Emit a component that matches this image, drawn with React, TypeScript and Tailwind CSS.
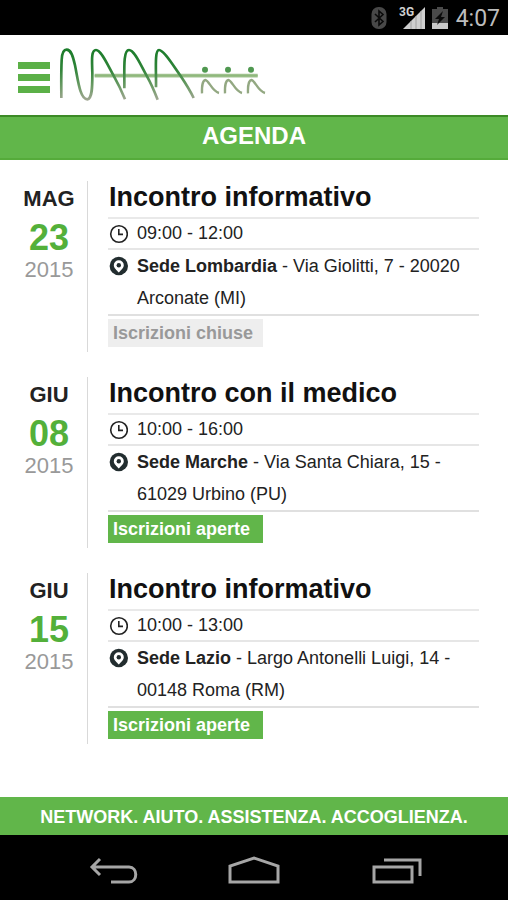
interface AgendaEvent {
  month: string;
  day: string;
  year: string;
  title: string;
  time: string;
  venue: string;
  address: string;
  open: boolean;
}

const EVENTS: AgendaEvent[] = [
  {
    month: "MAG",
    day: "23",
    year: "2015",
    title: "Incontro informativo",
    time: "09:00 - 12:00",
    venue: "Sede Lombardia",
    address: "Via Giolitti, 7 - 20020 Arconate (MI)",
    open: false,
  },
  {
    month: "GIU",
    day: "08",
    year: "2015",
    title: "Incontro con il medico",
    time: "10:00 - 16:00",
    venue: "Sede Marche",
    address: "Via Santa Chiara, 15 - 61029 Urbino (PU)",
    open: true,
  },
  {
    month: "GIU",
    day: "15",
    year: "2015",
    title: "Incontro informativo",
    time: "10:00 - 13:00",
    venue: "Sede Lazio",
    address: "Largo Antonelli Luigi, 14 - 00148 Roma (RM)",
    open: true,
  },
];

function StatusBar() {
  return (
    <div className="flex h-[35px] items-center justify-end bg-black pr-2">
      {/* Bluetooth */}
      <svg className="mr-3 h-[22px] w-4" viewBox="0 0 16 22" fill="none">
        <rect x="0.5" y="0" width="15" height="22" rx="7" fill="#484848" />
        <path d="M4 7l8 7.5-4 3.5V4l4 3.5L4 15" stroke="#0a0a0a" strokeWidth="1.6" />
      </svg>
      {/* Signal */}
      <svg className="mr-[7px] h-6 w-[26px]" viewBox="0 0 26 24">
        <path d="M26 1v22H4z" fill="#cfcfcf" />
        <path d="M12 15v8M17 10v13M22 5v18" stroke="#a0a0a0" strokeWidth="1" />
        <path d="M0 0h14v11H0z" fill="#000" />
        <text x="0" y="10" fontSize="12" fontWeight="700" fill="#d0d0d0" fontFamily="Roboto, sans-serif">
          3G
        </text>
      </svg>
      {/* Battery */}
      <svg className="mr-2 h-[22px] w-4" viewBox="0 0 16 22">
        <path d="M5 0h6v2h5v20H0V2h5z" fill="#4a4a4a" />
        <path d="M0 16h16v6H0z" fill="#c8c8c8" />
        <path d="M11 4l-8 8h4l-2 6 8-8H9z" fill="#0a0a0a" />
      </svg>
      <span className="pt-0.5 font-[Roboto,sans-serif] text-[23px] leading-8 text-[#bdbdbd]">4:07</span>
    </div>
  );
}

function Logo() {
  return (
    <svg className="h-[60px] w-[210px]" viewBox="174 30 630 180" fill="none" role="img" aria-label="NAAA">
      <defs>
        <linearGradient id="stroke" gradientUnits="userSpaceOnUse" x1="0" y1="36" x2="0" y2="192">
          <stop offset="0" stopColor="#1a7c2a" />
          <stop offset="0.4" stopColor="#2f8438" />
          <stop offset="0.75" stopColor="#6f9c68" />
          <stop offset="1" stopColor="#a0a692" />
        </linearGradient>
      </defs>
      <path d="M284 119H773" stroke="#a3c493" strokeWidth="11" />
      <path d="M284 119H773" stroke="#8fb87c" strokeWidth="5" />
      <g stroke="url(#stroke)" strokeWidth="8" strokeLinejoin="round">
        <path d="M184 186C184 150 183 110 185 72C186 50 192 41 200 41C213 41 219 60 225 88C234 132 240 190 262 190C278 188 277 145 277 110C276 75 273 42 288 42C304 42 325 92 342 121C354 142 366 168 375 190" />
        <path d="M373 157C374 110 368 42 387 42C404 42 424 92 441 121C453 142 464 168 473 191" />
        <path d="M468 154C469 108 463 42 477 42C492 42 521 91 542 120C556 141 571 165 581 186" />
      </g>
      {[615, 684, 753].map((x) => (
        <g key={x}>
          <circle cx={x} cy="101" r="9" fill="#4f9850" />
          <path
            d={`M${x - 9} 172C${x - 10} 150 ${x - 6} 133 ${x + 1} 132C${x + 12} 133 ${x + 20} 165 ${x + 42} 171`}
            stroke="#93a882"
            strokeWidth="7"
          />
        </g>
      ))}
    </svg>
  );
}

function Header() {
  return (
    <header className="flex h-20 items-center bg-white pt-0.5 pl-[18px]">
      <button type="button" aria-label="Menu" className="mt-[3px] flex w-8 flex-col gap-[5px]">
        <span className="h-[7px] w-full bg-[#5bb047]" />
        <span className="h-[7px] w-full bg-[#5bb047]" />
        <span className="h-[7px] w-full bg-[#5bb047]" />
      </button>
      <div className="ml-2">
        <Logo />
      </div>
    </header>
  );
}

function ClockIcon() {
  return (
    <svg className="h-5 w-5 shrink-0" viewBox="0 0 20 20" fill="none" stroke="#222" strokeWidth="1.6">
      <circle cx="11" cy="10" r="8.3" />
      <path d="M10.8 5v5.4H15" />
    </svg>
  );
}

function PinIcon() {
  return (
    <svg className="h-5 w-5 shrink-0" viewBox="0 0 20 20">
      <circle cx="10.8" cy="10" r="9.2" fill="#222d2f" />
      <path d="M10.8 16.5C8.8 14 5.8 12 5.8 9.2a5 5 0 0 1 10 0c0 2.8-3 4.8-5 7.3z" fill="#fff" />
      <circle cx="10.8" cy="9.2" r="2.2" fill="#222d2f" />
    </svg>
  );
}

function EventItem({ event }: { event: AgendaEvent }) {
  return (
    <article className="flex">
      <div className="flex w-[76px] shrink-0 flex-col items-center pt-1">
        <span className="text-[22px] leading-7 font-bold text-[#222]">{event.month}</span>
        <span className="text-[36px] leading-[50px] font-bold text-[#53b03a]">{event.day}</span>
        <span className="text-[22px] leading-3.5 text-[#999]">{event.year}</span>
      </div>

      <div className="min-w-0 flex-1 border-l border-[#d9d9d9] pb-[5px] pl-5">
        <h2 className="border-b-2 border-[#e9e9e9] pb-1 pl-px text-[27px] leading-8 font-bold text-[#111]">
          {event.title}
        </h2>
        <p className="flex items-center gap-[9px] border-b-2 border-[#e6e6e6] text-[18px] leading-[29px] text-[#222]">
          <ClockIcon />
          {event.time}
        </p>
        <p className="flex gap-[9px] border-b-2 border-[#e0e0e0] text-[18px] leading-8 text-[#222]">
          <span className="flex h-8 items-center">
            <PinIcon />
          </span>
          <span>
            <strong>{event.venue}</strong> - {event.address}
          </span>
        </p>
        {event.open ? (
          <button
            type="button"
            className="mt-[3px] block h-7 w-[155px] bg-[#61b64a] pl-[5px] text-left text-[18px] leading-[26px] font-bold text-white"
          >
            Iscrizioni aperte
          </button>
        ) : (
          <button
            type="button"
            disabled
            className="mt-[3px] block h-7 w-[155px] bg-[#eeeeee] pl-[5px] text-left text-[18px] leading-[26px] font-bold text-[#999]"
          >
            Iscrizioni chiuse
          </button>
        )}
      </div>
    </article>
  );
}

function NavigationBar() {
  return (
    <nav className="flex h-[65px] items-center justify-between bg-black px-[84px] pt-1">
      <button type="button" aria-label="Indietro">
        <svg className="h-8 w-[54px]" viewBox="0 0 54 32" fill="none" stroke="#a6a6a6" strokeWidth="3">
          <path d="M8 13h37c9 0 9 15 0 15H27M16 5l-8 8 8 8" />
        </svg>
      </button>
      <button type="button" aria-label="Home">
        <svg className="h-8 w-[54px]" viewBox="0 0 54 32" fill="none" stroke="#a6a6a6" strokeWidth="3">
          <path d="M3 28V12l24-8 24 8v16z" />
        </svg>
      </button>
      <button type="button" aria-label="Recenti">
        <svg className="h-8 w-[54px]" viewBox="0 0 54 32" fill="none" stroke="#a6a6a6" strokeWidth="3">
          <path d="M4 13h38v15H4zM14 6h36v16" />
        </svg>
      </button>
    </nav>
  );
}

export default function App() {
  return (
    <div className="flex min-h-screen flex-col bg-white font-['Liberation_Sans',Arial,sans-serif]">
      <StatusBar />
      <Header />
      <h1 className="h-[45px] border-t-2 border-b-2 border-t-[#3c8a26] border-b-[#55ab3a] bg-[#61b64a] text-center text-[24px] leading-[38px] font-bold text-white">
        AGENDA
      </h1>
      <main className="flex flex-1 flex-col gap-[25px] pt-[21px] pr-[29px] pb-8 pl-[11px]">
        {EVENTS.map((event) => (
          <EventItem key={`${event.month}-${event.day}`} event={event} />
        ))}
      </main>
      <footer className="h-[38px] bg-[#61b64a] text-center text-[18px] leading-10 font-bold text-white">
        NETWORK. AIUTO. ASSISTENZA. ACCOGLIENZA.
      </footer>
      <NavigationBar />
    </div>
  );
}
